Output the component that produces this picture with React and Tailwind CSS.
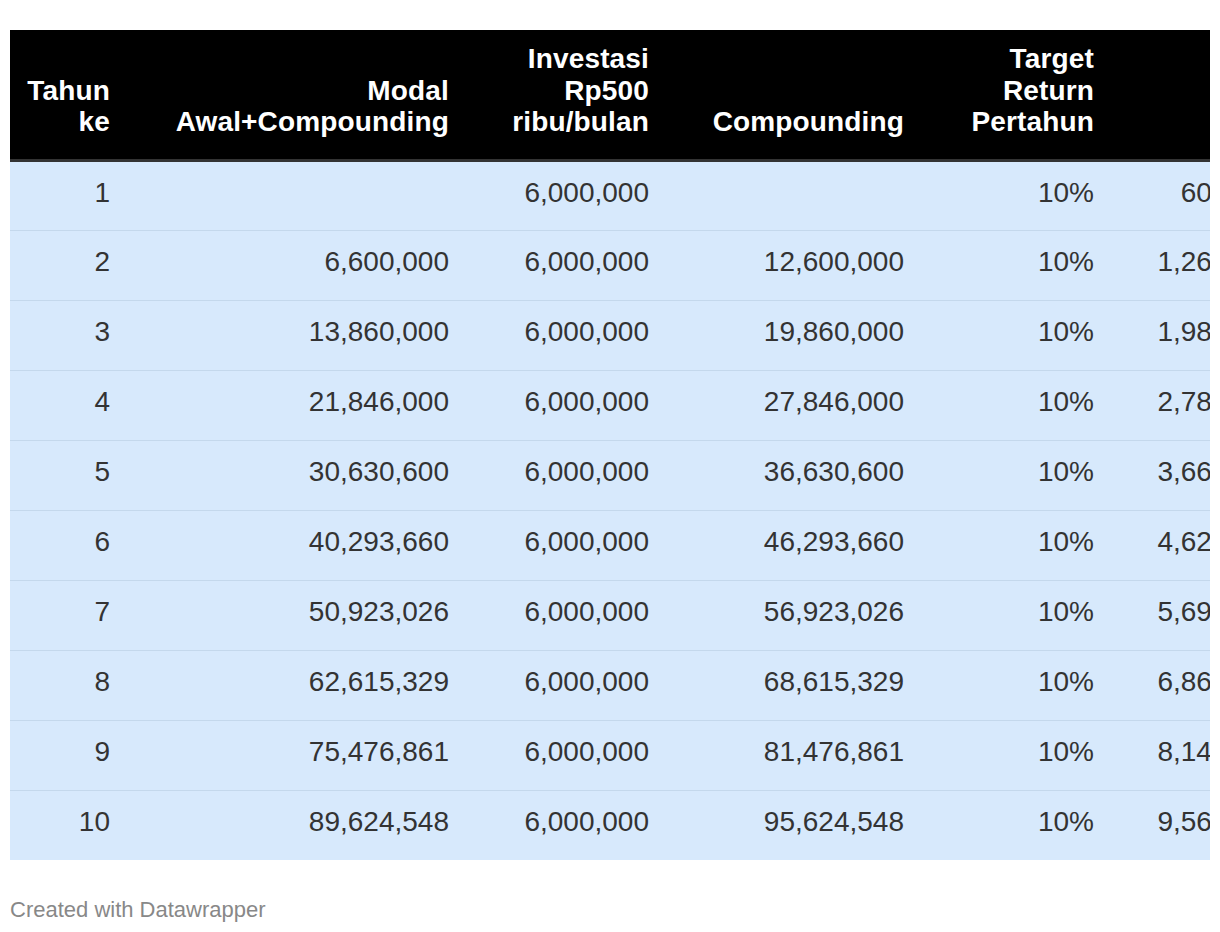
const rows = [
    ['1', '', '6,000,000', '', '10%', '600,000'],
    ['2', '6,600,000', '6,000,000', '12,600,000', '10%', '1,260,000'],
    ['3', '13,860,000', '6,000,000', '19,860,000', '10%', '1,986,000'],
    ['4', '21,846,000', '6,000,000', '27,846,000', '10%', '2,784,600'],
    ['5', '30,630,600', '6,000,000', '36,630,600', '10%', '3,663,060'],
    ['6', '40,293,660', '6,000,000', '46,293,660', '10%', '4,629,366'],
    ['7', '50,923,026', '6,000,000', '56,923,026', '10%', '5,692,303'],
    ['8', '62,615,329', '6,000,000', '68,615,329', '10%', '6,861,533'],
    ['9', '75,476,861', '6,000,000', '81,476,861', '10%', '8,147,686'],
    ['10', '89,624,548', '6,000,000', '95,624,548', '10%', '9,562,455'],
];

export default function App() {
    return (
        <div className="bg-white min-h-[932px] pt-[30px] font-['Liberation_Sans',Arial,sans-serif]">
            <div className="ml-[10px] w-[1200px] overflow-hidden">
                <table className="table-fixed w-[1282px] border-collapse">
                    <colgroup>
                        <col className="w-[110px]" />
                        <col className="w-[339px]" />
                        <col className="w-[200px]" />
                        <col className="w-[255px]" />
                        <col className="w-[190px]" />
                        <col className="w-[188px]" />
                    </colgroup>
                    <thead>
                        <tr className="bg-black text-white h-[130px] border-b-[3px] border-[#333333]">
                            {[
                                <>Tahun<br />ke</>,
                                <>Modal<br />Awal+Compounding</>,
                                <>Investasi<br />Rp500<br />ribu/bulan</>,
                                <>Compounding</>,
                                <>Target<br />Return<br />Pertahun</>,
                                <></>,
                            ].map((h, i) => (
                                <th
                                    key={i}
                                    className="align-bottom text-right pr-[10px] pb-[21px] text-[28px] leading-[31.5px] font-bold tracking-[0.15px] whitespace-nowrap"
                                >
                                    {h}
                                </th>
                            ))}
                        </tr>
                    </thead>
                    <tbody>
                        {rows.map((r, i) => (
                            <tr
                                key={i}
                                className={`bg-[#d7e9fc] h-[70px] ${i < rows.length - 1 ? 'border-b border-[#c4d8ec]' : ''}`}
                            >
                                {r.map((c, j) => (
                                    <td
                                        key={j}
                                        className="text-right pr-[10px] pb-[6px] text-[28px] leading-[32px] text-[#333333] whitespace-nowrap"
                                    >
                                        {c}
                                    </td>
                                ))}
                            </tr>
                        ))}
                    </tbody>
                </table>
            </div>
            <p className="ml-[10px] mt-[33px] text-[22px] text-[#888888]">Created with Datawrapper</p>
        </div>
    );
}
